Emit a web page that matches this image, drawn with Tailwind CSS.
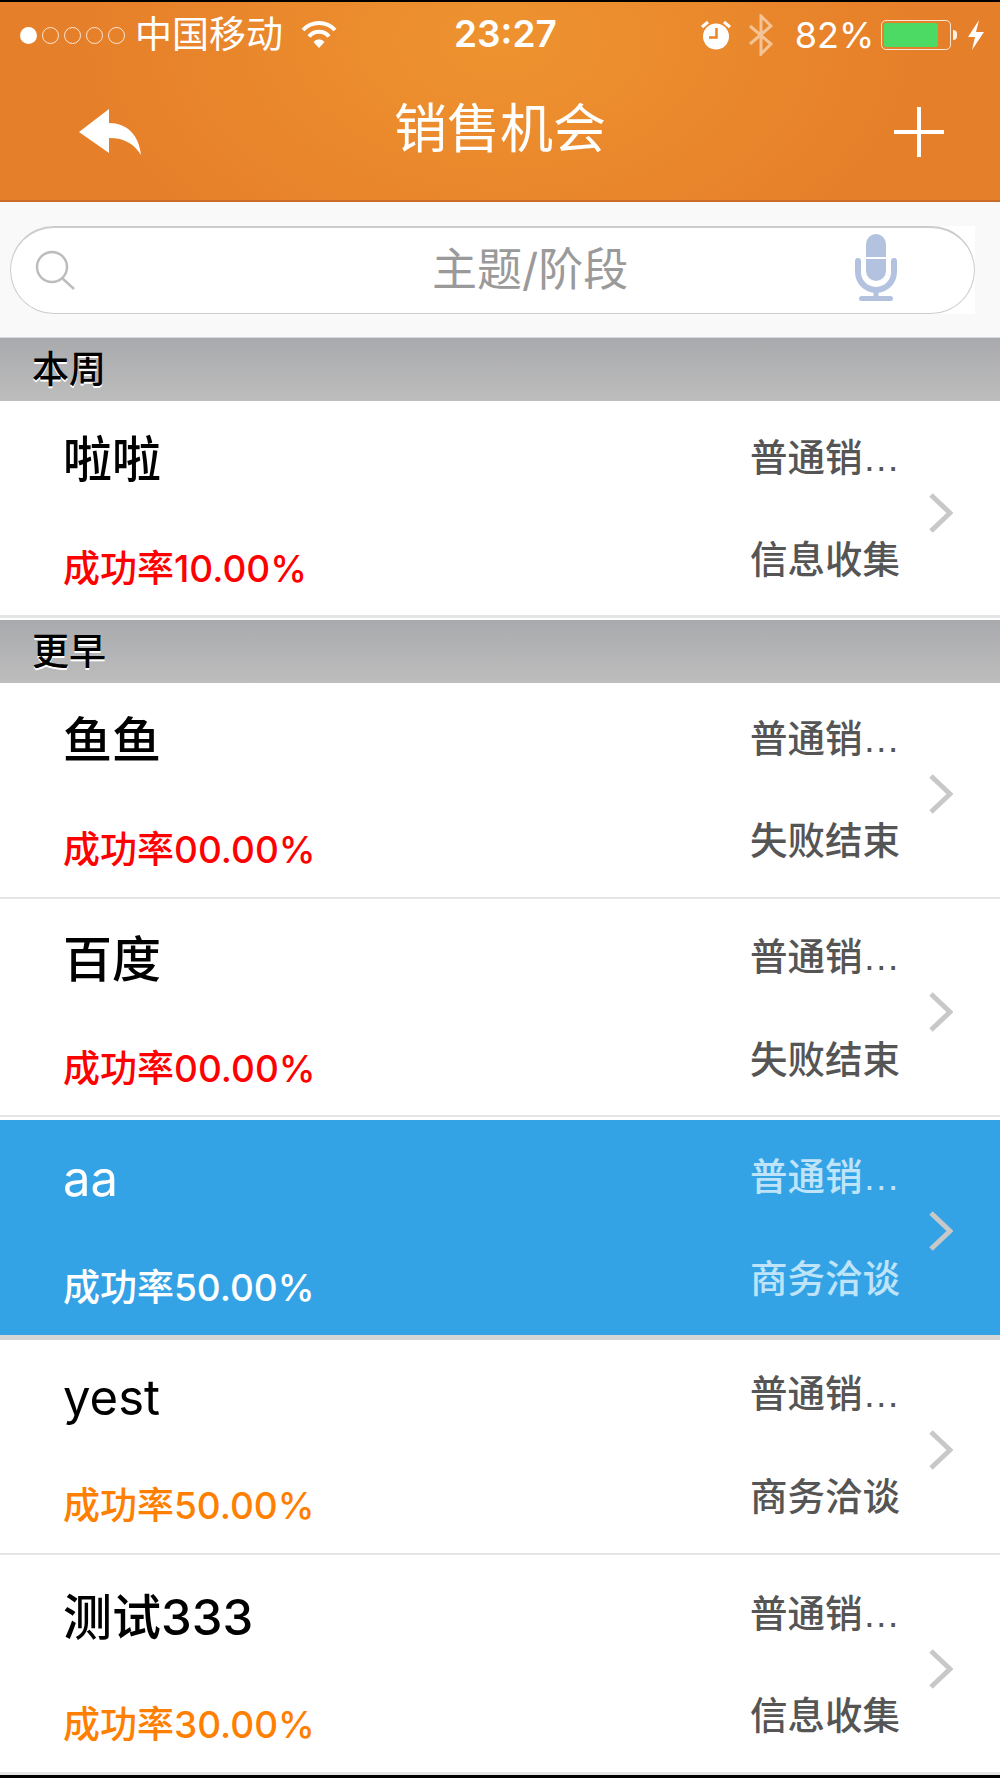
<!DOCTYPE html>
<html lang="zh-CN">
<head>
    <meta charset="UTF-8">
    <meta name="viewport" content="width=device-width, initial-scale=1.0">
    <title>销售机会</title>
    <script src="https://cdn.jsdelivr.net/npm/@tailwindcss/browser@4"></script>
</head>
<body class="bg-white font-['Inter','Noto_Sans_CJK_SC',sans-serif]">
    <div class="w-[1000px] h-[1778px] overflow-hidden flex flex-col">
        <!-- Header -->
        <header class="h-[202px] shrink-0 border-t-2 border-b-2 border-t-black border-b-[#c96d28] text-white bg-[radial-gradient(ellipse_420px_260px_at_50%_20%,#ee9330,#e67f29)]">
            <div class="h-[66px] flex items-center relative">
                <div class="ml-[20px] w-[17px] h-[17px] rounded-full bg-white"></div>
                <div class="ml-[5px] w-[17px] h-[17px] rounded-full border border-white/80"></div>
                <div class="ml-[5px] w-[17px] h-[17px] rounded-full border border-white/80"></div>
                <div class="ml-[5px] w-[17px] h-[17px] rounded-full border border-white/80"></div>
                <div class="ml-[5px] w-[17px] h-[17px] rounded-full border border-white/80"></div>
                <span class="ml-[10px] text-[37px] leading-[40px]">中国移动</span>
                <svg class="ml-[18px]" width="36" height="28" viewBox="0 0 36 28" fill="none" stroke="#fff" stroke-width="4"><path d="M2 9a22 22 0 0 1 32 0"/><path d="M8 15.5a13 13 0 0 1 20 0"/><path d="M18 27l-5.5-6a7 7 0 0 1 11 0z" fill="#fff" stroke="none"/></svg>
                <span class="ml-[117px] mb-[2px] text-[37px] leading-[40px] font-semibold">23:27</span>
                <svg class="ml-[144px]" width="30" height="30" viewBox="0 0 30 30"><circle cx="15" cy="16.500" r="13" fill="#fff"/><path d="M1 7l6-5M29 7l-6-5" stroke="#fff" stroke-width="3"/><path d="M15.500 8v9.500H8" fill="none" stroke="#e88529" stroke-width="2.500"/></svg>
                <svg class="ml-[18px] opacity-50" width="24" height="42" viewBox="0 0 24 42" fill="none" stroke="#fff" stroke-width="3"><path d="M1 12l21 18-10 10V2l10 10L1 30"/></svg>
                <span class="ml-[22px] text-[36px] leading-[40px]">82%</span>
                <div class="ml-[7px] w-[70px] h-[30px] rounded-[5px] border border-white/80 p-[2px]"><div class="w-[54px] h-full rounded-[2px] bg-[#4cd964]"></div></div>
                <div class="ml-[2px] w-[4px] h-[10px] rounded-r-full bg-white/90"></div>
                <svg class="ml-[10px]" width="18" height="30" viewBox="0 0 18 30"><path d="M12 0L1 17h7l-3 13 12-18h-8z" fill="#fff"/></svg>
            </div>
            <div class="h-[132px] flex items-center relative">
                <svg class="ml-[79px] mb-[4px]" width="62" height="46" viewBox="0 0 62 46"><path d="M0 23L30 0v14c18 0 30 12 32 32-7-11-16-17-32-17v15z" fill="#fff"/></svg>
                <span class="ml-[253px] mb-[10px] text-[53px] leading-[60px]">销售机会</span>
                <svg class="ml-[288px] mb-[5px]" width="50" height="50" viewBox="0 0 50 50" stroke="#fff" stroke-width="4"><path d="M0 25h50M25 0v50"/></svg>
            </div>
        </header>

        <!-- Search -->
        <div class="h-[136px] shrink-0 bg-[#f9f9f9] pl-[10px] pt-[24px] border-b border-[#d5d9e0]">
            <div class="w-[965px] h-[88px] bg-white rounded-l-[44px]">
                <div class="h-full rounded-full border border-t-2 border-[#cccccc] flex items-center">
                    <svg class="ml-[24px]" width="42" height="42" viewBox="0 0 42 42" fill="none" stroke="#bdbdbd" stroke-width="2.500"><circle cx="17" cy="17" r="15"/><path d="M27 28l12 11"/></svg>
                    <span class="ml-[355px] mb-[2px] text-[45px] leading-[50px] text-[#9a9a9a]">主题/阶段</span>
                    <svg class="ml-[227px] mb-[6px]" width="42" height="68" viewBox="0 0 42 68" fill="#b3c3df"><path d="M11 10a10 10 0 0 1 20 0v13H11z"/><path d="M11 25h20v12a10 10 0 0 1-20 0z"/><path d="M3 27v11a18 18 0 0 0 36 0V27" fill="none" stroke="#b3c3df" stroke-width="6" stroke-linecap="round"/><path d="M18.500 55h5v8h-5z"/><rect x="4" y="62" width="34" height="5" rx="2.500"/></svg>
                </div>
            </div>
        </div>

        <!-- List -->
        <div class="h-[63px] shrink-0 pl-[32px] text-[37px] leading-[64px] font-medium text-black bg-gradient-to-b from-[#a9aaad] to-[#bdbdbd] [text-shadow:0_2px_0_#fff]">本周</div>
        <div class="h-[217px] mb-[2px] shrink-0 flex pt-[33px] border-b-[3px] border-[#e5e5e5]">
            <div class="flex-1 pl-[63px]">
                <div class="-mt-[2px] text-[49px] leading-[56px] font-medium text-black">啦啦</div>
                <div class="mt-[59px] text-[37px] leading-[44px] font-medium text-[#ff0000]">成功率10.00%</div>
            </div>
            <div class="w-[150px] mt-[2px] text-[37.500px] leading-[44px] font-medium text-[#555555]">
                <div>普通销<span class="font-['Liberation_Sans']">…</span></div>
                <div class="mt-[58px]">信息收集</div>
            </div>
            <svg class="ml-[29px] mr-[47px] mt-[59px]" width="24" height="40" viewBox="0 0 24 40" fill="none" stroke="#c8c8c8" stroke-width="5"><path d="M2 2l19 18L2 38"/></svg>
        </div>
        <div class="h-[63px] shrink-0 pl-[32px] text-[37px] leading-[64px] font-medium text-black bg-gradient-to-b from-[#a9aaad] to-[#bdbdbd] [text-shadow:0_2px_0_#fff]">更早</div>
        <div class="h-[216px] shrink-0 flex pt-[32px] border-b-2 border-[#e5e5e5]">
            <div class="flex-1 pl-[63px]">
                <div class="-mt-[2px] text-[49px] leading-[56px] font-medium text-black">鱼鱼</div>
                <div class="mt-[59px] text-[37px] leading-[44px] font-medium text-[#ff0000]">成功率00.00%</div>
            </div>
            <div class="w-[150px] mt-[2px] text-[37.500px] leading-[44px] font-medium text-[#555555]">
                <div>普通销<span class="font-['Liberation_Sans']">…</span></div>
                <div class="mt-[58px]">失败结束</div>
            </div>
            <svg class="ml-[29px] mr-[47px] mt-[59px]" width="24" height="40" viewBox="0 0 24 40" fill="none" stroke="#c8c8c8" stroke-width="5"><path d="M2 2l19 18L2 38"/></svg>
        </div>
        <div class="h-[218px] shrink-0 flex pt-[34px] border-b-2 border-[#e5e5e5]">
            <div class="flex-1 pl-[63px]">
                <div class="-mt-[1px] text-[49px] leading-[56px] font-medium text-black">百度</div>
                <div class="mt-[59px] text-[37px] leading-[44px] font-medium text-[#ff0000]">成功率00.00%</div>
            </div>
            <div class="w-[150px] mt-[2px] text-[37.500px] leading-[44px] font-medium text-[#555555]">
                <div>普通销<span class="font-['Liberation_Sans']">…</span></div>
                <div class="mt-[59px]">失败结束</div>
            </div>
            <svg class="ml-[29px] mr-[47px] mt-[59px]" width="24" height="40" viewBox="0 0 24 40" fill="none" stroke="#c8c8c8" stroke-width="5"><path d="M2 2l19 18L2 38"/></svg>
        </div>
        <div class="h-[223px] shrink-0 flex pt-[33px] border-t-[3px] border-t-white border-b-[5px] border-b-[#d5d5d5] bg-[#33a3e6]">
            <div class="flex-1 pl-[63px]">
                <div class="-mt-[2px] text-[49px] leading-[56px] text-white">aa</div>
                <div class="mt-[59px] text-[37px] leading-[44px] font-medium text-white">成功率50.00%</div>
            </div>
            <div class="w-[150px] mt-[2px] text-[37.500px] leading-[44px] font-medium text-[#bfe3f8]">
                <div>普通销<span class="font-['Liberation_Sans']">…</span></div>
                <div class="mt-[58px]">商务洽谈</div>
            </div>
            <svg class="ml-[29px] mr-[47px] mt-[58px]" width="24" height="40" viewBox="0 0 24 40" fill="none" stroke="#c8c8c8" stroke-width="5"><path d="M2 2l19 18L2 38"/></svg>
        </div>
        <div class="h-[215px] shrink-0 flex pt-[30px] border-b-2 border-[#e5e5e5]">
            <div class="flex-1 pl-[63px]">
                <div class="text-[49px] leading-[56px] text-black">yest</div>
                <div class="mt-[58px] text-[37px] leading-[44px] font-medium text-[#ff8000]">成功率50.00%</div>
            </div>
            <div class="w-[150px] mt-[2px] text-[37.500px] leading-[44px] font-medium text-[#555555]">
                <div>普通销<span class="font-['Liberation_Sans']">…</span></div>
                <div class="mt-[59px]">商务洽谈</div>
            </div>
            <svg class="ml-[29px] mr-[47px] mt-[60px]" width="24" height="40" viewBox="0 0 24 40" fill="none" stroke="#c8c8c8" stroke-width="5"><path d="M2 2l19 18L2 38"/></svg>
        </div>
        <div class="h-[220px] shrink-0 flex pt-[35px] border-b-[3px] border-[#e5e5e5]">
            <div class="flex-1 pl-[63px]">
                <div class="text-[49px] leading-[56px] font-medium text-black">测试333</div>
                <div class="mt-[57px] text-[37px] leading-[44px] font-medium text-[#ff8000]">成功率30.00%</div>
            </div>
            <div class="w-[150px] mt-[2px] text-[37.500px] leading-[44px] font-medium text-[#555555]">
                <div>普通销<span class="font-['Liberation_Sans']">…</span></div>
                <div class="mt-[58px]">信息收集</div>
            </div>
            <svg class="ml-[29px] mr-[47px] mt-[59px]" width="24" height="40" viewBox="0 0 24 40" fill="none" stroke="#c8c8c8" stroke-width="5"><path d="M2 2l19 18L2 38"/></svg>
        </div>
        <div class="flex-1 bg-black"></div>
    </div>
</body>
</html>
